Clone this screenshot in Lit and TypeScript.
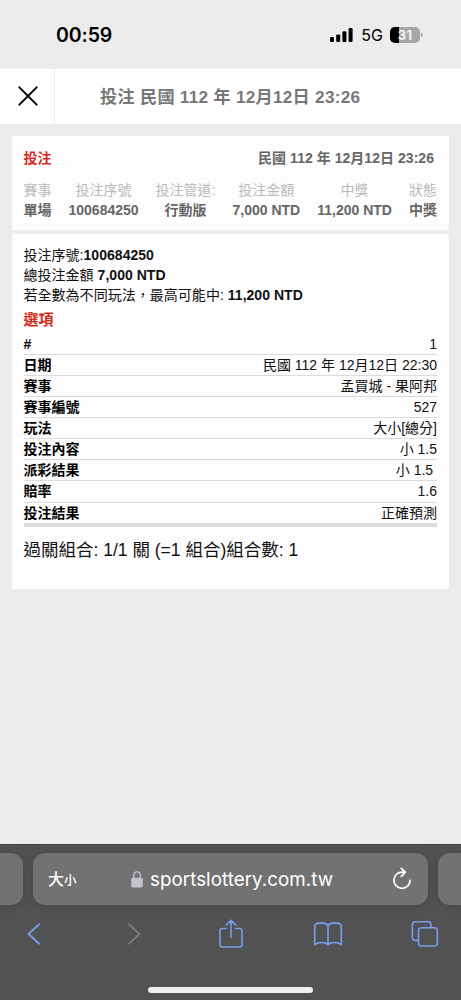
import { LitElement, html, css } from "lit";
import { customElement } from "lit/decorators.js";

const SUMMARY = [
  ["賽事", "單場"],
  ["投注序號", "100684250"],
  ["投注管道:", "行動版"],
  ["投注金額", "7,000 NTD"],
  ["中獎", "11,200 NTD"],
  ["狀態", "中獎"],
];

const ROWS = [
  ["#", "1"],
  ["日期", "民國 112 年 12月12日 22:30"],
  ["賽事", "孟買城 - 果阿邦"],
  ["賽事編號", "527"],
  ["玩法", "大小[總分]"],
  ["投注內容", "小 1.5"],
  ["派彩結果", "小 1.5\u00a0"],
  ["賠率", "1.6"],
  ["投注結果", "正確預測"],
];

@customElement("status-bar")
class StatusBar extends LitElement {
  static styles = css`
    :host { display: flex; height: 69px; box-sizing: border-box; padding: 22.5px 38px 0 56px; justify-content: space-between; align-items: flex-start; color: #000; font-family: Inter, sans-serif; }
    .time { font-size: 19.5px; line-height: 24px; font-weight: 600; letter-spacing: -0.1px; }
    .right { display: flex; align-items: center; height: 24px; }
    .net { font-size: 16px; font-weight: 400; margin: 0 7px 0 8px; letter-spacing: 0; }
    .batt { position: relative; display: flex; height: 16px; }
    .pct { position: absolute; left: 0; top: 0; width: 30px; line-height: 16px; text-align: center; color: #f4f4f4; font-size: 13px; font-weight: 700; letter-spacing: 0.3px; }
    svg { display: block; }
  `;
  render() {
    return html`
      <div class="time">00:59</div>
      <div class="right">
        <svg width="23" height="16" viewBox="0 0 23 16">
          <rect x="0" y="10" width="4" height="5" rx="1.2" />
          <rect x="6.2" y="7.4" width="4" height="7.6" rx="1.2" />
          <rect x="12.4" y="4.2" width="4" height="10.8" rx="1.2" />
          <rect x="18.6" y="1" width="4" height="14" rx="1.2" />
        </svg>
        <span class="net">5G</span>
        <div class="batt">
          <svg width="33" height="16" viewBox="0 0 33 16">
            <rect width="30" height="16" rx="5" fill="#a6a6a6" />
            <path d="M9 0H5a5 5 0 0 0-5 5v6a5 5 0 0 0 5 5h4z" />
            <path d="M31 5.5q1.8.8 1.8 2.5T31 10.5z" fill="#a6a6a6" />
          </svg>
          <span class="pct">31</span>
        </div>
      </div>
    `;
  }
}

@customElement("bet-card")
class BetCard extends LitElement {
  static styles = css`
    :host { display: block; margin: 12.5px 12px 0; color: #111; font-size: 14px; font-family: "Liberation Sans", "Noto Sans CJK TC", sans-serif; }
    .summary { height: 95px; box-sizing: border-box; padding: 12px 12px 0 11.5px; background: #fdfdfd; border-bottom: 1px solid #f2f2f2; color: #666; }
    .head { display: flex; justify-content: space-between; line-height: 20px; font-weight: 700; padding-right: 3px; }
    .red { color: #d9291c; font-weight: 700; }
    .date { letter-spacing: 0.04px; }
    .cols { display: flex; justify-content: space-between; margin-top: 12px; }
    .col { display: flex; flex-direction: column; align-items: center; line-height: 20px; white-space: nowrap; }
    .label { color: #b9b9b9; }
    .value { font-weight: 700; }
    .detail { height: 355px; box-sizing: border-box; margin-top: 3px; padding: 11px 12px 0 11.5px; background: #fdfdfd; }
    .line { line-height: 20px; white-space: pre; letter-spacing: 0.03px; }
    .options { font-size: 15px; line-height: 22px; margin: 4px 0 2.5px; }
    .row { display: flex; justify-content: space-between; height: 21.13px; box-sizing: border-box; line-height: 20px; border-bottom: 1px solid #dcdcdc; white-space: pre; }
    .row:last-child { border-bottom: 4px solid #dcdcdc; height: 24px; }
    .key { font-weight: 700; color: #000; }
    .combo { font-size: 17.5px; line-height: 24px; margin-top: 11px; white-space: pre; }
  `;
  render() {
    return html`
      <section class="summary">
        <div class="head"><span class="red">投注</span><span class="date">民國 112 年 12月12日 23:26</span></div>
        <div class="cols">
          ${SUMMARY.map(([l, v]) => html`<div class="col"><span class="label">${l}</span><span class="value">${v}</span></div>`)}
        </div>
      </section>
      <section class="detail">
        <div class="line">投注序號:<b>100684250</b></div>
        <div class="line">總投注金額 <b>7,000 NTD</b></div>
        <div class="line">若全數為不同玩法，最高可能中: <b>11,200 NTD</b></div>
        <div class="options red">選項</div>
        <div>
          ${ROWS.map(([k, v]) => html`<div class="row"><span class="key">${k}</span><span>${v}</span></div>`)}
        </div>
        <div class="combo">過關組合: 1/1 關 (=1 組合)組合數: 1</div>
      </section>
    `;
  }
}

@customElement("browser-bar")
class BrowserBar extends LitElement {
  static styles = css`
    :host { display: flex; flex-direction: column; height: 156px; background: #525252; border-top: 1px solid #464646; box-sizing: border-box; overflow: hidden; color: #fff; font-family: Inter, "Noto Sans CJK TC", sans-serif; }
    .tabs { display: grid; grid-template-columns: 23px 395px 23px; column-gap: 10px; height: 52px; margin-top: 8px; flex: none; }
    .tab { background: #727272; box-shadow: 0 1px 10px rgba(0, 0, 0, 0.16); border-radius: 12px; }
    .prev { border-radius: 0 12px 12px 0; }
    .next { border-radius: 12px 0 0 12px; }
    .address { display: flex; align-items: center; padding: 2px 16px 0 15px; }
    .aa { display: flex; align-items: baseline; width: 83px; font-size: 16px; font-weight: 500; line-height: 24px; }
    .small { font-size: 12.5px; }
    .url { flex: 1; margin-left: 7px; font-size: 18.8px; line-height: 24px; letter-spacing: 0.03px; white-space: nowrap; }
    .tools { display: grid; grid-template-columns: 100px 90.5px 95.5px 98px 28px; align-items: center; height: 34px; margin: 12px 21px 0 27px; flex: none; }
    .home { width: 165px; height: 6px; border-radius: 3px; background: #efefef; margin: 35.5px auto 0 148px; flex: none; }
    svg { display: block; fill: none; stroke: #779eea; stroke-width: 1.6; stroke-linecap: round; stroke-linejoin: round; overflow: visible; }
    .lock { stroke: #c5c3cb; margin-bottom: 2px; }
    .reload { stroke: #fff; stroke-width: 1.7; margin-bottom: 2px; }
    .off { stroke: #7d7d7d; }
  `;
  render() {
    return html`
      <div class="tabs">
        <div class="tab prev"></div>
        <div class="tab address">
          <div class="aa"><span>大</span><span class="small">小</span></div>
          <svg class="lock" width="12" height="17" viewBox="0 0 12 17"><rect x="1" y="7.5" width="10" height="8.2" rx="1" fill="#c5c3cb" /><path d="M2.7 7V4.2a3.3 3.3 0 0 1 6.6 0V7" stroke-width="1.4" /></svg>
          <span class="url">sportslottery.com.tw</span>
          <svg class="reload" width="20" height="22" viewBox="0 0 20 22"><path d="M10.8 4.2A8.1 8.1 0 1 0 18.1 12.3M10.8 4.2H12.8M9.3 .3l4 3.9-4 4.2" /></svg>
        </div>
        <div class="tab next"></div>
      </div>
      <div class="tools">
        <svg width="14" height="22" viewBox="0 0 14 22"><path d="M12.2 1.2 1.5 11l10.7 9.8" stroke-width="1.9" /></svg>
        <svg class="off" width="14" height="22" viewBox="0 0 14 22"><path d="M1.8 1.2 12.5 11 1.8 20.8" stroke-width="1.7" /></svg>
        <svg width="26" height="30" viewBox="0 0 26 30"><path d="M8.3 9.5H4.5a2.5 2.5 0 0 0-2.5 2.5v13.5A2.5 2.5 0 0 0 4.5 28h17a2.5 2.5 0 0 0 2.5-2.5V12a2.5 2.5 0 0 0-2.5-2.5h-3.8M13 18.5V1.2M8.2 6 13 1.2 17.8 6" /></svg>
        <svg width="30" height="26" viewBox="0 0 30 26"><path d="M15 4.7C12.5 1.4 5 .8 1.7 4V23.8C5 20.8 12 20.8 15 23.8 18 20.8 25 20.8 28.3 23.8V4C25 .8 17.5 1.4 15 4.7zM15 4.7V23.8" /></svg>
        <svg width="28" height="26" viewBox="0 0 28 26"><path d="M7.2 19.4H4.4A3 3 0 0 1 1.4 16.4V3.7a3 3 0 0 1 3-3H17a3 3 0 0 1 3 3V6.5" /><rect x="7.5" y="6.8" width="18.8" height="18.2" rx="3" /></svg>
      </div>
      <div class="home"></div>
    `;
  }
}

@customElement("app-root")
class AppRoot extends LitElement {
  static styles = css`
    :host { display: flex; flex-direction: column; width: 461px; height: 1000px; background: #ececec; overflow: hidden; }
    .bar { display: flex; height: 54.5px; background: #fff; flex: none; }
    .close { width: 55px; padding-left: 1px; box-sizing: border-box; display: flex; align-items: center; justify-content: center; border-right: 1px solid #ececec; }
    .title { flex: 1; padding-left: 45px; font: 700 17.2px/57px "Liberation Sans", "Noto Sans CJK TC", sans-serif; letter-spacing: 0.26px; color: #777; white-space: nowrap; }
    .grow { flex: 1; }
  `;
  render() {
    return html`
      <status-bar></status-bar>
      <header class="bar">
        <div class="close"><svg width="20" height="20" viewBox="0 0 20 20"><path d="M1.4 1.4l17.2 17.2M18.6 1.4 1.4 18.6" stroke="#000" stroke-width="2" stroke-linecap="round" /></svg></div>
        <div class="title">投注 民國 112 年 12月12日 23:26</div>
      </header>
      <bet-card></bet-card>
      <div class="grow"></div>
      <browser-bar></browser-bar>
    `;
  }
}
